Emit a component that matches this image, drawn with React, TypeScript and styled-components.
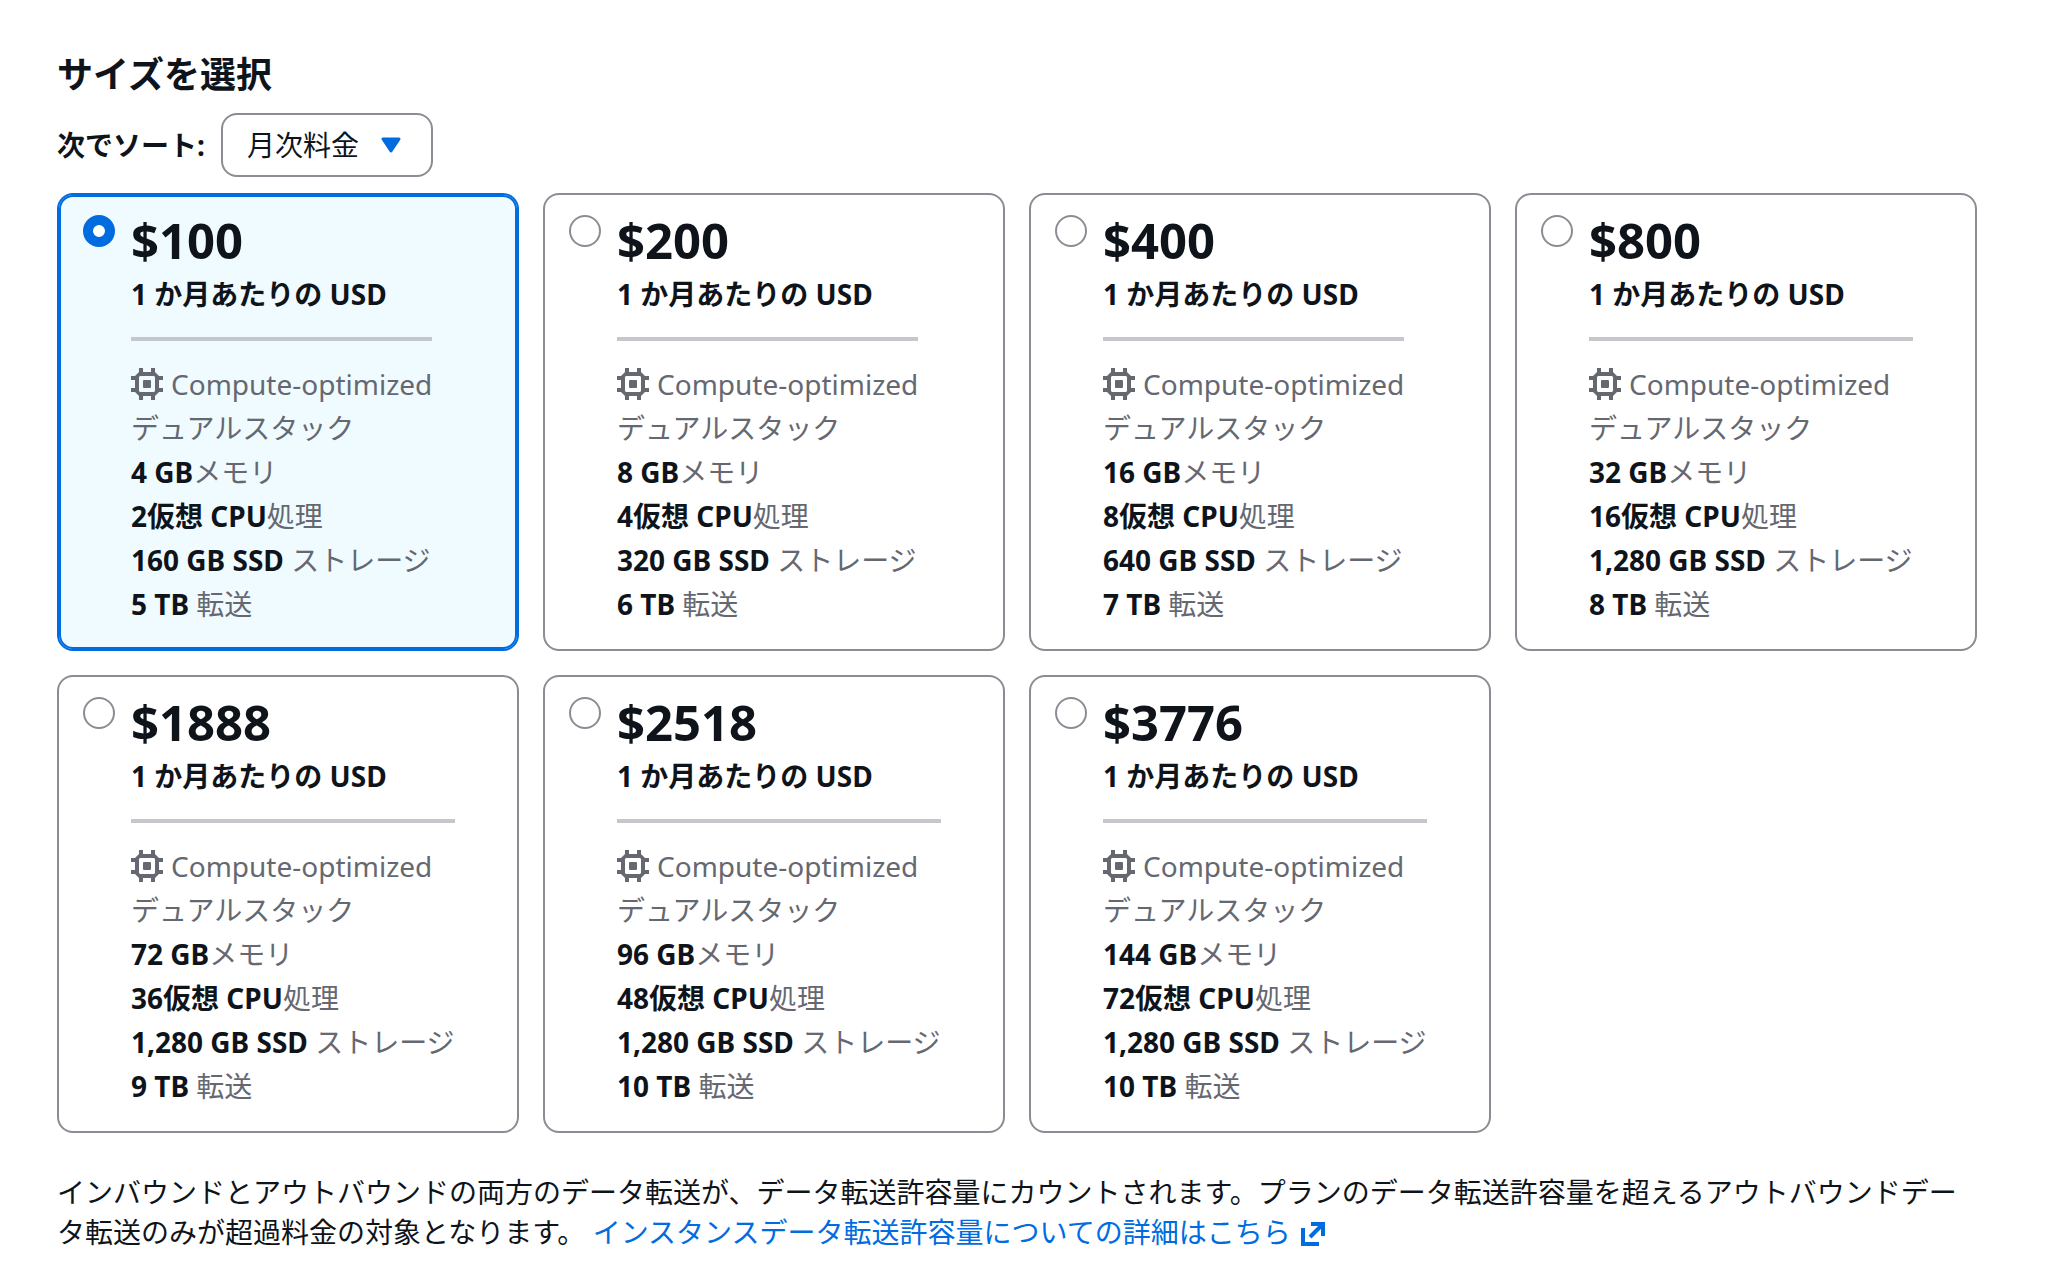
import React, { useState } from "react";
import styled, { createGlobalStyle } from "styled-components";

const color = {
  text: "#0f141a",
  muted: "#656871",
  border: "#8c8c94",
  divider: "#c6c6cd",
  accent: "#006ce0",
  selected: "#f0fbff",
};

const GlobalStyle = createGlobalStyle`
  *, *::before, *::after { box-sizing: border-box; }
  body {
    margin: 0;
    background: #fff;
    color: ${color.text};
    font: 400 28px/44px "Noto Sans", "Noto Sans CJK JP", sans-serif;
  }
`;

const Page = styled.main`
  padding: 53px 87px 32px 57px;
`;

const Title = styled.h2`
  margin: 0 0 16px;
  font-size: 36px;
  line-height: 44px;
  font-weight: 700;
`;

const SortBar = styled.div`
  display: flex;
  align-items: center;
  gap: 16px;
  margin-bottom: 16px;
`;

const SortLabel = styled.label`
  font-weight: 700;
`;

const SelectBox = styled.div`
  position: relative;
`;

const Select = styled.select`
  appearance: none;
  display: block;
  height: 64px;
  padding: 0 71px 0 24px;
  border: 2px solid ${color.border};
  border-radius: 16px;
  background: #fff;
  color: inherit;
  font: inherit;
`;

const Caret = styled.svg`
  position: absolute;
  top: 24px;
  right: 32px;
  pointer-events: none;
`;

const PlanGrid = styled.div`
  display: grid;
  grid-template-columns: repeat(4, minmax(0, 1fr));
  gap: 24px;
`;

const Card = styled.label<{ $selected: boolean }>`
  display: flex;
  align-items: flex-start;
  gap: 16px;
  padding: 13px 24px 23px;
  border: 2px solid ${(p) => (p.$selected ? color.accent : color.border)};
  border-radius: 16px;
  background: ${(p) => (p.$selected ? color.selected : "#fff")};
  box-shadow: ${(p) => (p.$selected ? `inset 0 0 0 2px ${color.accent}` : "none")};
  cursor: pointer;
`;

const Radio = styled.input`
  appearance: none;
  flex: none;
  width: 32px;
  height: 32px;
  margin: 7px 0 0;
  border: 2px solid ${color.border};
  border-radius: 50%;
  background: #fff;

  &:checked {
    border: 10px solid ${color.accent};
  }
`;

const PlanBody = styled.div`
  display: flex;
  flex-direction: column;
  white-space: nowrap;
`;

const Price = styled.span`
  font-size: 49px;
  line-height: 64px;
  font-weight: 700;
`;

const Period = styled.span`
  font-weight: 700;
`;

const Divider = styled.hr`
  width: 100%;
  height: 4px;
  margin: 21px 0;
  border: 0;
  background: ${color.divider};
`;

const Family = styled.span`
  display: flex;
  align-items: center;
  gap: 8px;
  color: ${color.muted};
`;

const Spec = styled.span`
  color: ${color.muted};
`;

const Amount = styled.b`
  color: ${color.text};
  font-weight: 700;
`;

const Note = styled.p`
  margin: 39px 0 0;
  line-height: 40px;
`;

const NoteLink = styled.a`
  color: ${color.accent};
  text-decoration: none;
`;

const ExternalMark = styled.svg`
  margin-left: 10px;
  vertical-align: -3px;
`;

const ChipIcon = () => (
  <svg width="32" height="32" viewBox="0 0 32 32" fill={color.muted} aria-hidden="true">
    <path d="M8 0h4v5H8zM20 0h4v5h-4zM8 27h4v5H8zM20 27h4v5h-4zM0 8h5v4H0zM0 20h5v4H0zM27 8h5v4h-5zM27 20h5v4h-5z" />
    <path
      fillRule="evenodd"
      d="M8 4h16l4 4v16l-4 4H8l-4-4V8zM9 8L8 9v14l1 1h14l1-1V9l-1-1z"
    />
    <rect x="12" y="12" width="8" height="8" rx="1" />
  </svg>
);

const plans = [
  { price: 100, memory: "4", cpu: "2", storage: "160", transfer: "5" },
  { price: 200, memory: "8", cpu: "4", storage: "320", transfer: "6" },
  { price: 400, memory: "16", cpu: "8", storage: "640", transfer: "7" },
  { price: 800, memory: "32", cpu: "16", storage: "1,280", transfer: "8" },
  { price: 1888, memory: "72", cpu: "36", storage: "1,280", transfer: "9" },
  { price: 2518, memory: "96", cpu: "48", storage: "1,280", transfer: "10" },
  { price: 3776, memory: "144", cpu: "72", storage: "1,280", transfer: "10" },
];

export default function App() {
  const [selected, setSelected] = useState(100);

  return (
    <Page lang="ja">
      <GlobalStyle />
      <Title id="size-title">サイズを選択</Title>
      <SortBar>
        <SortLabel htmlFor="sort">次でソート:</SortLabel>
        <SelectBox>
          <Select id="sort" defaultValue="price">
            <option value="price">月次料金</option>
          </Select>
          <Caret width="20" height="16" viewBox="0 0 20 16" aria-hidden="true">
            <path
              d="M2 2h16l-8 12z"
              fill={color.accent}
              stroke={color.accent}
              strokeWidth="3"
              strokeLinejoin="round"
            />
          </Caret>
        </SelectBox>
      </SortBar>

      <PlanGrid role="radiogroup" aria-labelledby="size-title">
        {plans.map((plan) => (
          <Card key={plan.price} $selected={plan.price === selected}>
            <Radio
              type="radio"
              name="plan"
              value={plan.price}
              checked={plan.price === selected}
              onChange={() => setSelected(plan.price)}
            />
            <PlanBody>
              <Price>${plan.price}</Price>
              <Period>1 か月あたりの USD</Period>
              <Divider />
              <Family>
                <ChipIcon />
                Compute-optimized
              </Family>
              <Spec>デュアルスタック</Spec>
              <Spec>
                <Amount>{plan.memory} GB</Amount>メモリ
              </Spec>
              <Spec>
                <Amount>{plan.cpu}仮想 CPU</Amount>処理
              </Spec>
              <Spec>
                <Amount>{plan.storage} GB SSD</Amount> ストレージ
              </Spec>
              <Spec>
                <Amount>{plan.transfer} TB</Amount> 転送
              </Spec>
            </PlanBody>
          </Card>
        ))}
      </PlanGrid>

      <Note>
        インバウンドとアウトバウンドの両方のデータ転送が、データ転送許容量にカウントされます。プランのデータ転送許容量を超えるアウトバウンドデータ転送のみが超過料金の対象となります。{" "}
        <NoteLink href="#data-transfer">
          インスタンスデータ転送許容量についての詳細はこちら
          <ExternalMark width="24" height="24" viewBox="0 0 24 24" aria-hidden="true">
            <path
              d="M2 6v16h16M10 2h12v12M22 2L9 15"
              fill="none"
              stroke={color.accent}
              strokeWidth="4"
            />
          </ExternalMark>
        </NoteLink>
      </Note>
    </Page>
  );
}
